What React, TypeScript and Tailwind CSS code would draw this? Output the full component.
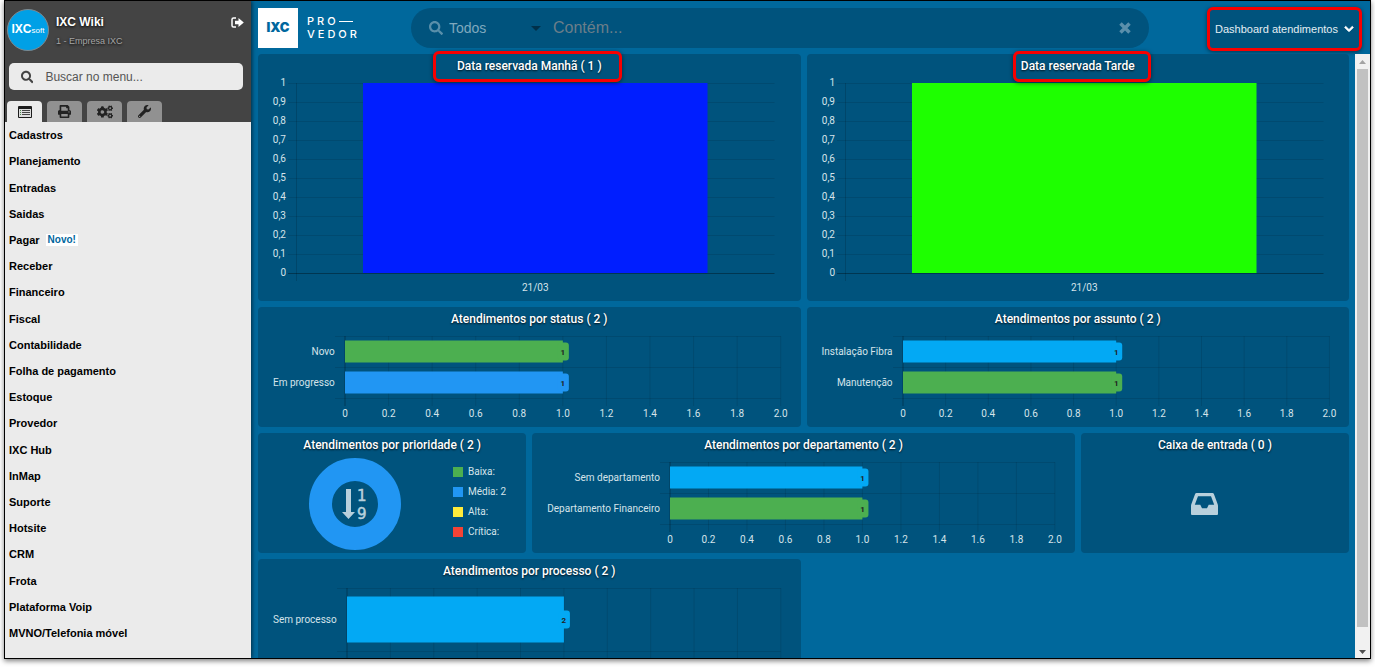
import type { ReactNode } from "react";
import { FaChevronDown, FaCogs, FaPrint, FaSearch, FaWrench } from "react-icons/fa";

type Bar = { label: string; value: number; color: string };

const MENU = [
  "Cadastros",
  "Planejamento",
  "Entradas",
  "Saidas",
  "Pagar",
  "Receber",
  "Financeiro",
  "Fiscal",
  "Contabilidade",
  "Folha de pagamento",
  "Estoque",
  "Provedor",
  "IXC Hub",
  "InMap",
  "Suporte",
  "Hotsite",
  "CRM",
  "Frota",
  "Plataforma Voip",
  "MVNO/Telefonia móvel",
];

const GREEN = "#4caf50";
const BLUE = "#2196f3";
const LIGHT_BLUE = "#03a9f4";

const PRIORITIES = [
  { label: "Baixa:", color: "bg-[#4caf50]" },
  { label: "Média: 2", color: "bg-[#2196f3]" },
  { label: "Alta:", color: "bg-[#ffeb3b]" },
  { label: "Crítica:", color: "bg-[#f44336]" },
];

const MenuListIcon = () => (
  <svg viewBox="0 0 14 12" className="h-3 w-3.5">
    <rect width="14" height="12" rx="1" fill="#1c1c1c" />
    <rect x="1" y="3" width="12" height="8" fill="#ddd" />
    <path d="M4 4.5h8M4 6.5h8M4 8.5h8" stroke="#444" />
    <path d="M2 4.5h1M2 6.5h1M2 8.5h1" stroke="#4a8a4a" />
  </svg>
);

const SignOutIcon = () => (
  <svg viewBox="0 0 13 11" className="h-[11px] w-[13px]">
    <path d="M5 1H2.5Q1 1 1 2.5v6Q1 10 2.5 10H5" fill="none" stroke="#fff" strokeWidth="1.5" />
    <path d="M4 3.7h3.5V1L12.8 5.5 7.5 10V7.3H4z" fill="#fff" />
  </svg>
);

const InboxIcon = () => (
  <svg viewBox="0 0 27 22" className="h-[22px] w-[27px]">
    <path
      fillRule="evenodd"
      d="M5.5 0h16q1 0 1.4 1L26.600 11q.4 1 .4 2v8q0 1-1 1H1q-1 0-1-1v-8q0-1 .4-2L4.100 1Q4.500 0 5.500 0zM7 3.200L3.800 11.700H9.300L11 15.200h5l1.700-3.500h5.500L20 3.200z"
      fill="#b8d0dc"
    />
  </svg>
);

const TABS = [
  { name: "Menu", icon: <MenuListIcon /> },
  { name: "Relatórios", icon: <FaPrint size={13} /> },
  { name: "Configurações", icon: <FaCogs size={16} /> },
  { name: "Ferramentas", icon: <FaWrench size={13} /> },
];

const Sidebar = () => (
  <aside className="relative z-10 flex w-[246px] shrink-0 flex-col bg-[#ebebeb] shadow-[1px_0_4px_rgba(0,0,0,0.6)]">
    <div className="bg-[#444]">
      <div className="flex items-start pt-2 pr-[7px] pl-0.5">
        <div className="mr-[7px] flex size-[42px] shrink-0 items-center justify-center rounded-full border border-[#7d8a91] bg-[#00a0e6] text-white">
          <p className="text-[12px] leading-4 font-bold">
            IXC<span className="text-[8px] font-normal">soft</span>
          </p>
        </div>
        <div className="flex-1 pt-1 [text-shadow:0_1px_3px_#000]">
          <h2 className="text-[12px] leading-[18px] font-bold text-white">IXC Wiki</h2>
          <p className="text-[9px] leading-5 text-[#a5a5a5]">1 - Empresa IXC</p>
        </div>
        <button aria-label="Sair" className="mt-2">
          <SignOutIcon />
        </button>
      </div>

      <label className="mx-1 mt-3 mr-2 flex h-[27px] items-center rounded-[5px] bg-[#ebebeb] px-3 text-[#444]">
        <FaSearch size={14} />
        <input
          aria-label="Buscar no menu"
          placeholder="Buscar no menu..."
          className="ml-3 w-full min-w-0 bg-transparent text-[12px] outline-none placeholder:text-[#555]"
        />
      </label>

      <div className="mt-[11px] flex gap-[5px] pl-0.5">
        {TABS.map((tab, i) => (
          <button
            key={tab.name}
            aria-label={tab.name}
            className={`flex h-[21px] w-[35px] items-center justify-center rounded-t text-[#222] ${
              i === 0 ? "bg-[#ebebeb]" : "bg-[#919191]"
            }`}
          >
            {tab.icon}
          </button>
        ))}
      </div>
    </div>

    <ul className="flex flex-1 flex-col pb-3">
      {MENU.map((item) => (
        <li key={item} className="flex flex-1 items-center px-1">
          <a href="#" className="text-[11px] leading-4 font-bold text-black">
            {item}
          </a>
          {item === "Pagar" && (
            <span className="ml-1.5 bg-white px-0.5 text-[10px] leading-3 font-bold text-[#00679e]">
              Novo!
            </span>
          )}
        </li>
      ))}
    </ul>
  </aside>
);

const TopBar = () => (
  <header className="flex h-[53px] shrink-0 items-start pt-[7px] pr-1.5 pl-[7px]">
    <div className="flex h-10 w-10 shrink-0 items-center justify-center bg-white text-[13px] font-black text-[#00679e] font-['Inter',sans-serif]">
      IXC
    </div>
    <div className="ml-[9px] w-[104px] pt-[7px] text-[11px] leading-[13px] font-medium tracking-[3px] text-white font-['Inter',sans-serif]">
      <div className="flex items-center">
        PRO <span className="h-px w-3.5 bg-white" />
      </div>
      <div>VEDOR</div>
    </div>

    <div className="flex h-10 flex-1 items-center rounded-full bg-[#00537d] px-[18px] text-[#7fa9be]">
      <FaSearch size={14} className="opacity-70" />
      <select
        aria-label="Filtro"
        className="ml-1.5 w-[82px] appearance-none bg-transparent text-[14px] outline-none"
      >
        <option>Todos</option>
      </select>
      <svg viewBox="0 0 10 5" className="h-[5px] w-2.5">
        <path d="M0 0h10L5 5z" fill="#00304a" />
      </svg>
      <input
        aria-label="Contém"
        placeholder="Contém..."
        className="ml-3 min-w-0 flex-1 bg-transparent text-[16px] outline-none placeholder:text-[#6b7e89]"
      />
      <button aria-label="Limpar">
        <svg viewBox="0 0 12 12" className="size-3">
          <path d="M1.500 1.500l9 9M10.500 1.500l-9 9" stroke="#5a8fab" strokeWidth="3.500" />
        </svg>
      </button>
    </div>

    <button className="-mt-px mr-0.5 ml-[58px] flex h-11 w-[155px] items-center justify-center gap-1.5 rounded-md border-3 border-[#f80000] bg-[#00537d] text-[11px] whitespace-nowrap text-[#e4eef3] shadow-[0_1px_4px_rgba(0,0,0,0.5)]">
      Dashboard atendimentos
      <FaChevronDown size={10} className="text-white" stroke="#fff" strokeWidth={40} />
    </button>
  </header>
);

type PanelProps = {
  title: string;
  className?: string;
  highlight?: string;
  children: ReactNode;
};

const Panel = ({ title, className = "", highlight, children }: PanelProps) => (
  <section
    className={`rounded bg-[#00537d] font-['Roboto',sans-serif] ${className}`}
  >
    <h3 className="flex h-6 items-center justify-center text-[12px] leading-[15px] font-medium text-white [text-shadow:0_1px_2px_rgba(0,0,0,0.8)]">
      <span className="relative">
        {title}
        {highlight && (
          <span
            className={`absolute rounded-md border-3 border-[#f80000] shadow-[0_1px_4px_rgba(0,0,0,0.5)] ${highlight}`}
          />
        )}
      </span>
    </h3>
    {children}
  </section>
);

const ColumnChart = ({ color }: { color: string }) => (
  <div className="h-[223px] pt-[5px] pr-[26px] pl-[38px]">
    <svg width="100%" height="210" className="overflow-visible text-[10px]">
      {Array.from({ length: 11 }, (_, i) => {
        const value = (10 - i) / 10;
        return (
          <g key={i}>
            <line
              x1="-8"
              x2="100%"
              y1={i * 19 + 0.5}
              y2={i * 19 + 0.5}
              stroke={i === 10 ? "rgba(0,0,0,0.35)" : "rgba(0,0,0,0.1)"}
            />
            <text x="-10" y={i * 19 + 3} textAnchor="end" fill="#d5e3ea">
              {String(value).replace(".", ",")}
            </text>
          </g>
        );
      })}
      <line x1="0.5" x2="0.5" y1="0" y2="198" stroke="rgba(0,0,0,0.15)" />
      <rect x="14%" y="0" width="72%" height="190" fill={color} />
      <text x="50%" y="208" textAnchor="middle" fill="#d5e3ea">
        21/03
      </text>
    </svg>
  </div>
);

type BarChartProps = {
  bars: Bar[];
  max?: number;
  rowHeight?: number;
  barHeight?: number;
  ticks?: boolean;
};

const BarChart = ({
  bars,
  max = 2,
  rowHeight = 31,
  barHeight = 22,
  ticks = true,
}: BarChartProps) => {
  const bottom = bars.length * rowHeight;
  return (
    <div className="flex pt-[5px] pr-5 pl-[15px] text-[10px] text-[#d5e3ea]">
      <ul className="mr-2.5 text-right whitespace-nowrap">
        {bars.map((bar) => (
          <li
            key={bar.label}
            className="flex items-center justify-end"
            style={{ height: rowHeight }}
          >
            {bar.label}
          </li>
        ))}
      </ul>
      <svg height={bottom + 29} className="min-w-0 flex-1 overflow-visible">
        {Array.from({ length: 11 }, (_, i) => (
          <g key={i}>
            <line
              x1={`${i * 10}%`}
              x2={`${i * 10}%`}
              y1="0"
              y2={bottom + 8}
              stroke={i === 0 ? "rgba(0,0,0,0.3)" : "rgba(0,0,0,0.1)"}
            />
            {ticks && (
              <text x={`${i * 10}%`} y={bottom + 19} textAnchor="middle" fill="#d5e3ea">
                {i === 0 ? "0" : ((i * max) / 10).toFixed(1)}
              </text>
            )}
          </g>
        ))}
        {Array.from({ length: bars.length + 1 }, (_, i) => (
          <line
            key={i}
            x1="-10"
            x2="100%"
            y1={i * rowHeight + 0.5}
            y2={i * rowHeight + 0.5}
            stroke="rgba(0,0,0,0.1)"
          />
        ))}
        {bars.map((bar, i) => {
          const middle = i * rowHeight + rowHeight / 2;
          const end = `${(bar.value / max) * 100}%`;
          return (
            <g key={bar.label}>
              <rect y={middle - barHeight / 2} width={end} height={barHeight} fill={bar.color} />
              <svg x={end} y={middle - 9} className="overflow-visible">
                <rect x="-5" width="11" height="18" rx="3" fill={bar.color} />
                <text y="12" textAnchor="middle" className="text-[8px] font-bold" fill="#222">
                  {bar.value}
                </text>
              </svg>
            </g>
          );
        })}
      </svg>
    </div>
  );
};

const PriorityPanel = () => (
  <Panel title="Atendimentos por prioridade ( 2 )">
    <div className="flex items-start pt-px pl-[51px]">
      <svg viewBox="0 0 92 92" className="size-[92px] shrink-0 font-['DejaVu_Sans',sans-serif]">
        <circle cx="46" cy="46" r="34.5" fill="none" stroke={BLUE} strokeWidth="23" />
        <path d="M37 31h5v23h4l-6.5 7-6.5-7h4z" fill="#b8d0dc" />
        <g fontSize="15" fill="#b8d0dc" stroke="#b8d0dc" strokeWidth="0.5">
          <text x="48" y="43">
            1
          </text>
          <text x="48" y="61">
            9
          </text>
        </g>
      </svg>
      <ul className="ml-[52px] pt-1 text-[10px] leading-5 text-[#d5e3ea]">
        {PRIORITIES.map((item) => (
          <li key={item.label} className="flex items-center gap-[5px]">
            <span className={`size-2.5 ${item.color}`} />
            {item.label}
          </li>
        ))}
      </ul>
    </div>
  </Panel>
);

const ScrollBar = () => (
  <div className="flex w-[15px] shrink-0 flex-col items-center bg-[#f1f1f1]">
    <svg viewBox="0 0 15 15" className="size-[15px]">
      <path d="M4 10h7L7.5 6z" fill="#a3a3a3" />
    </svg>
    <div className="w-[11px] flex-1 bg-[#c1c1c1]" />
    <svg viewBox="0 0 15 31" className="h-[31px] w-[15px]">
      <path d="M4 23h7l-3.5 4z" fill="#505050" />
    </svg>
  </div>
);

const App = () => {
  return (
    <div className="h-screen overflow-hidden bg-white px-1 pb-2 font-['Liberation_Sans',Arial,sans-serif]">
      <div className="flex h-full overflow-hidden border border-black shadow-[0_2px_5px_rgba(0,0,0,0.5)]">
        <Sidebar />
        <main className="flex min-w-0 flex-1 flex-col bg-[#00689c]">
          <TopBar />
          <div className="flex min-h-0 flex-1">
            <div className="grid flex-1 grid-cols-4 content-start gap-1.5 pr-1.5 pl-[7px]">
              <Panel
                title="Data reservada Manhã ( 1 )"
                className="col-span-2"
                highlight="-top-2 -bottom-2 -left-6 -right-5"
              >
                <ColumnChart color="#001eff" />
              </Panel>
              <Panel
                title="Data reservada Tarde"
                className="col-span-2"
                highlight="-top-2 -bottom-2 -left-2 -right-4"
              >
                <ColumnChart color="#1eff00" />
              </Panel>
              <Panel title="Atendimentos por status ( 2 )" className="col-span-2">
                <BarChart
                  bars={[
                    { label: "Novo", value: 1, color: GREEN },
                    { label: "Em progresso", value: 1, color: BLUE },
                  ]}
                />
              </Panel>
              <Panel title="Atendimentos por assunto ( 2 )" className="col-span-2">
                <BarChart
                  bars={[
                    { label: "Instalação Fibra", value: 1, color: LIGHT_BLUE },
                    { label: "Manutenção", value: 1, color: GREEN },
                  ]}
                />
              </Panel>
              <PriorityPanel />
              <Panel title="Atendimentos por departamento ( 2 )" className="col-span-2">
                <BarChart
                  bars={[
                    { label: "Sem departamento", value: 1, color: LIGHT_BLUE },
                    { label: "Departamento Financeiro", value: 1, color: GREEN },
                  ]}
                />
              </Panel>
              <Panel title="Caixa de entrada ( 0 )">
                <div className="flex h-[94px] items-center justify-center pr-5">
                  <InboxIcon />
                </div>
              </Panel>
              <Panel title="Atendimentos por processo ( 2 )" className="col-span-2">
                <BarChart
                  max={4}
                  rowHeight={63}
                  barHeight={46}
                  ticks={false}
                  bars={[{ label: "Sem processo", value: 2, color: LIGHT_BLUE }]}
                />
              </Panel>
            </div>
            <ScrollBar />
          </div>
        </main>
      </div>
    </div>
  );
};

export default App;
